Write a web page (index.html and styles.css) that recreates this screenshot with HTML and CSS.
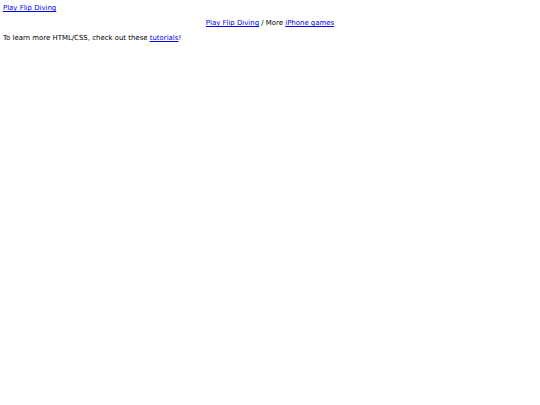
FILE: index.html
```html
<!DOCTYPE html>
<html>
<head>
<meta charset="utf-8">
<link rel="stylesheet" href="styles.css">
</head>
<body>
<div class="top"><a href="#">Play Flip Diving</a></div>
<div class="center"><a href="#">Play Flip Diving</a> / More <a href="#">iPhone games</a></div>
<div class="learn">To learn more HTML/CSS, check out these <a href="#">tutorials</a>!</div>
</body>
</html>
```
FILE: styles.css
```css
html, body { margin: 0; padding: 0; background: #fff; }
body { font-family: "DejaVu Sans", Verdana, sans-serif; font-size: 6.95px; line-height: 15px; color: #000; padding: 1px 3px 0; }
a { color: #0000ee; }
.top { }
.center { text-align: center; }
.learn { }
```
